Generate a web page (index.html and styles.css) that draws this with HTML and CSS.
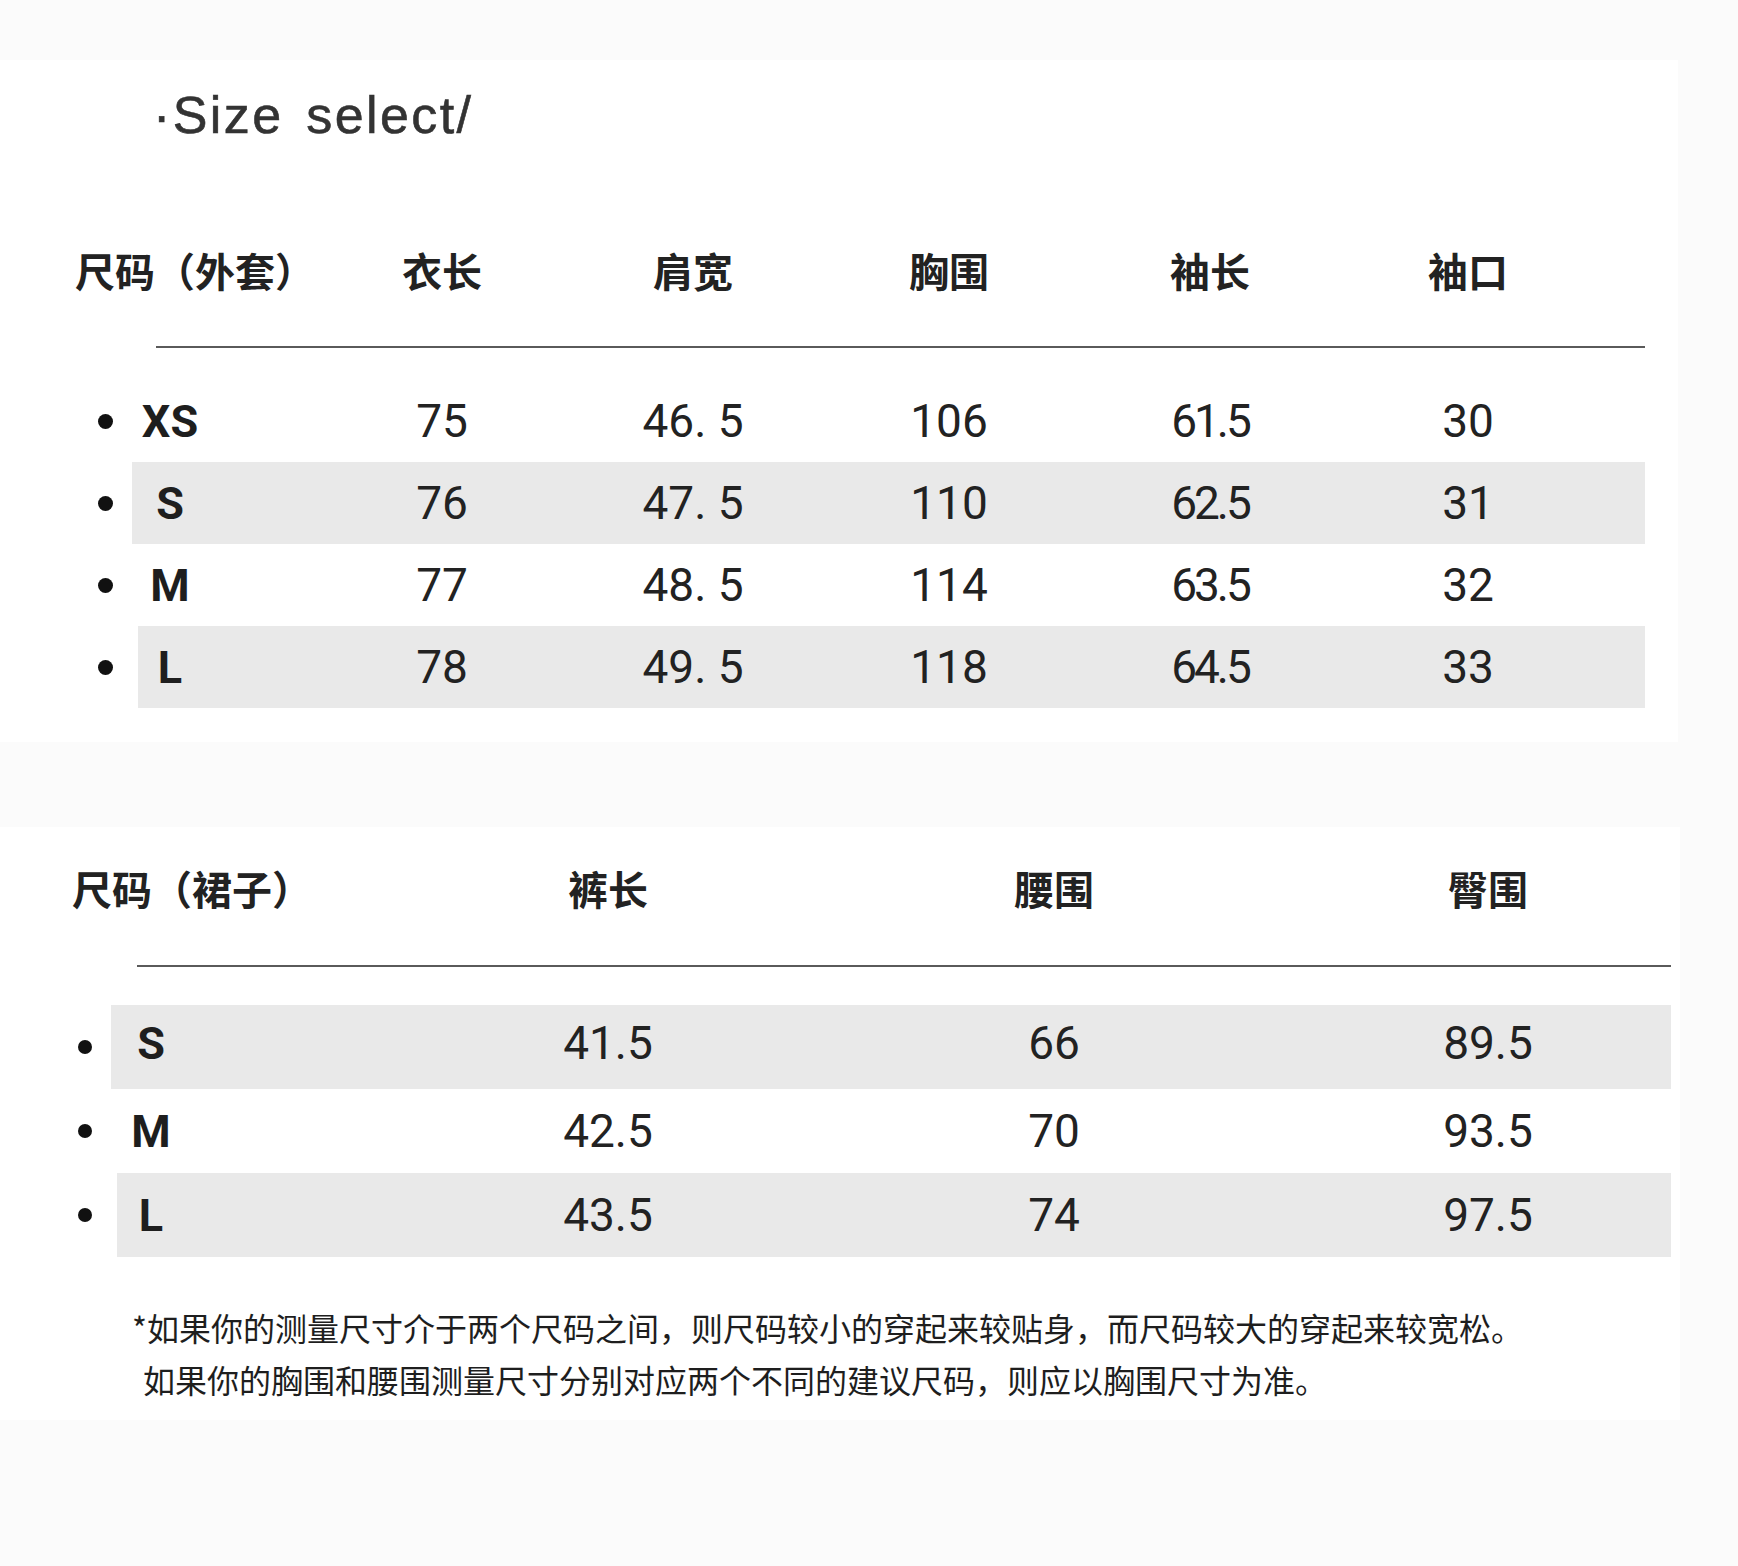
FILE: index.html
```html
<!DOCTYPE html>
<html lang="zh-CN">
<head>
<meta charset="utf-8">
<title>Size select</title>
<link rel="stylesheet" href="styles.css">
</head>
<body>
<div class="page">
  <section class="panel coat">
    <h1 class="title">·Size select/</h1>
    <div class="head">
      <span>尺码（外套）</span><span>衣长</span><span>肩宽</span><span>胸围</span><span>袖长</span><span>袖口</span>
    </div>
    <div class="rule"></div>
    <div class="rows">
      <div class="row">
        <span class="dot"></span>
        <div class="band"><span class="size">XS</span><span class="v">75</span><span class="v">46. 5</span><span class="v">106</span><span class="v narrow">61.5</span><span class="v">30</span></div>
      </div>
      <div class="row shaded">
        <span class="dot"></span>
        <div class="band"><span class="size">S</span><span class="v">76</span><span class="v">47. 5</span><span class="v">110</span><span class="v narrow">62.5</span><span class="v">31</span></div>
      </div>
      <div class="row">
        <span class="dot"></span>
        <div class="band"><span class="size">M</span><span class="v">77</span><span class="v">48. 5</span><span class="v">114</span><span class="v narrow">63.5</span><span class="v">32</span></div>
      </div>
      <div class="row shaded shift">
        <span class="dot"></span>
        <div class="band"><span class="size">L</span><span class="v">78</span><span class="v">49. 5</span><span class="v">118</span><span class="v narrow">64.5</span><span class="v">33</span></div>
      </div>
    </div>
  </section>

  <section class="panel skirt">
    <div class="head">
      <span>尺码（裙子）</span><span>裤长</span><span>腰围</span><span>臀围</span>
    </div>
    <div class="rule"></div>
    <div class="rows">
      <div class="row shaded raise">
        <span class="dot"></span>
        <div class="band"><span class="size">S</span><span class="v">41.5</span><span class="v">66</span><span class="v">89.5</span></div>
      </div>
      <div class="row">
        <span class="dot"></span>
        <div class="band"><span class="size">M</span><span class="v">42.5</span><span class="v">70</span><span class="v">93.5</span></div>
      </div>
      <div class="row shaded shift">
        <span class="dot"></span>
        <div class="band"><span class="size">L</span><span class="v">43.5</span><span class="v">74</span><span class="v">97.5</span></div>
      </div>
    </div>
    <div class="note">
      <p class="l1">*如果你的测量尺寸介于两个尺码之间，则尺码较小的穿起来较贴身，而尺码较大的穿起来较宽松。</p>
      <p class="l2">如果你的胸围和腰围测量尺寸分别对应两个不同的建议尺码，则应以胸围尺寸为准。</p>
    </div>
  </section>
</div>
</body>
</html>
```

FILE: styles.css
```css
html, body {
  margin: 0;
  background: #fbfbfb;
}
body {
  font-family: "Noto Sans CJK SC", "Noto Sans", sans-serif;
  color: #222;
}
.page {
  padding-top: 60px;
  min-height: 1506px;
}
.panel {
  background: #fff;
  box-sizing: border-box;
}

/* ---------- coat panel ---------- */
.coat {
  width: 1678px;
  height: 682px;
  padding-top: 25px;
}
.title {
  margin: 0 0 0 153px;
  font: 400 52px/60px "Liberation Sans", Arial, sans-serif;
  letter-spacing: 2.4px;
  word-spacing: 6px;
  color: #333;
  -webkit-text-stroke: 0.6px #333;
}

.head {
  display: grid;
  font: 700 40px/60px "Noto Sans CJK SC", sans-serif;
  color: #222;
  white-space: nowrap;
}
.head span {
  text-align: center;
}
.head span:first-child {
  text-align: left;
}
.coat .head {
  margin: 95px 0 0 75px;
  grid-template-columns: 239px 256px 246px 266px 256px 260px;
}

.rule {
  height: 2px;
  background: #5a5a5a;
}
.coat .rule {
  margin: 46px 0 0 156px;
  width: 1489px;
}

.rows {
  display: flex;
  flex-direction: column;
}
.coat .rows {
  margin-top: 32px;
}

.row {
  display: flex;
  align-items: center;
  box-sizing: border-box;
}
.coat .row {
  height: 82px;
  padding-left: 98px;
  padding-right: 33px;
}
.dot {
  flex: none;
  width: 15px;
  height: 15px;
  border-radius: 50%;
  background: #111;
}
.band {
  flex: 1;
  align-self: stretch;
  display: grid;
  align-items: center;
  margin-left: 19px;
  font: 400 46px/1 Roboto, "Liberation Sans", sans-serif;
  color: #222;
  white-space: nowrap;
}
.shaded .band {
  background: #e9e9e9;
}
.size {
  justify-self: start;
  font-weight: 700;
  font-size: 45px;
  text-align: center;
  color: #1e1e1e;
}
.v {
  text-align: center;
}
.narrow {
  letter-spacing: -3px;
}

.coat .band {
  grid-template-columns: 182px 256px 246px 266px 256px 260px;
}
.coat .size {
  width: 76px;
}
.coat .shift .band {
  margin-left: 25px;
  grid-template-columns: 176px 256px 246px 266px 256px 260px;
}
.coat .shift .size {
  width: 64px;
}

/* ---------- skirt panel ---------- */
.skirt {
  width: 1680px;
  margin-top: 85px;
  padding-top: 31px;
  padding-bottom: 15px;
}
.skirt .head {
  margin-left: 72px;
  grid-template-columns: 341px 390px 502px 366px;
}
.skirt .rule {
  margin: 47px 0 0 137px;
  width: 1534px;
}
.skirt .rows {
  margin-top: 38px;
}
.skirt .row {
  height: 84px;
  padding-left: 78px;
  padding-right: 9px;
}
.skirt .raise .band {
  padding-bottom: 8px;
}
.skirt .dot {
  width: 14px;
  height: 14px;
}
.skirt .band {
  grid-template-columns: 302px 390px 502px 366px;
}
.skirt .size {
  width: 80px;
}
.skirt .shift .band {
  margin-left: 25px;
  grid-template-columns: 296px 390px 502px 366px;
}
.skirt .shift .size {
  width: 68px;
}

/* ---------- footnote ---------- */
.note {
  margin: 44px 0 0 132px;
  font: 400 32px/52px "Noto Sans CJK SC", sans-serif;
  color: #1e1e1e;
  white-space: nowrap;
}
.note p {
  margin: 0;
}
.note .l2 {
  padding-left: 11px;
}
```
